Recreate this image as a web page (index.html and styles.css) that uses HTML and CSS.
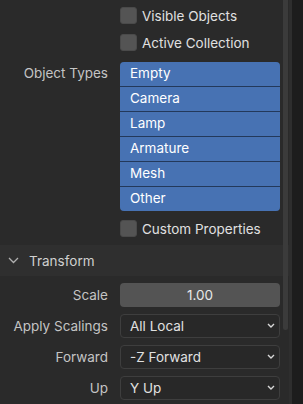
FILE: index.html
```html
<!DOCTYPE html>
<html>
<head>
<meta charset="utf-8">
<link rel="stylesheet" href="styles.css">
</head>
<body>
<div class="panel">
  <div class="content">
    <div class="row check-row">
      <div class="label"></div>
      <div class="check"><span class="box"></span><span>Visible Objects</span></div>
    </div>
    <div class="row check-row">
      <div class="label"></div>
      <div class="check"><span class="box"></span><span>Active Collection</span></div>
    </div>
    <div class="row list-row">
      <div class="label list-label">Object Types</div>
      <div class="list">
        <div class="item">Empty</div>
        <div class="item">Camera</div>
        <div class="item">Lamp</div>
        <div class="item">Armature</div>
        <div class="item">Mesh</div>
        <div class="item">Other</div>
      </div>
    </div>
    <div class="row check-row custom">
      <div class="label"></div>
      <div class="check"><span class="box"></span><span>Custom Properties</span></div>
    </div>
    <div class="header">
      <svg class="hchev" width="11" height="7" viewBox="0 0 11 7"><polyline points="1,1 5.5,5.5 10,1" fill="none" stroke="#b0b0b0" stroke-width="1.3"/></svg>
      <span>Transform</span>
    </div>
    <div class="row field-row first-field">
      <div class="label">Scale</div>
      <div class="num">1.00</div>
    </div>
    <div class="row field-row">
      <div class="label">Apply Scalings</div>
      <div class="drop"><span>All Local</span><svg width="8" height="5" viewBox="0 0 8 5"><polyline points="1,1 4,4 7,1" fill="none" stroke="#d8d8d8" stroke-width="1.4"/></svg></div>
    </div>
    <div class="row field-row">
      <div class="label">Forward</div>
      <div class="drop"><span>-Z Forward</span><svg width="8" height="5" viewBox="0 0 8 5"><polyline points="1,1 4,4 7,1" fill="none" stroke="#d8d8d8" stroke-width="1.4"/></svg></div>
    </div>
    <div class="row field-row">
      <div class="label">Up</div>
      <div class="drop"><span>Y Up</span><svg width="8" height="5" viewBox="0 0 8 5"><polyline points="1,1 4,4 7,1" fill="none" stroke="#d8d8d8" stroke-width="1.4"/></svg></div>
    </div>
  </div>
  <div class="scrollbar"></div>
</div>
</body>
</html>
```
FILE: styles.css
```css
html, body {
  margin: 0;
  padding: 0;
  height: 100%;
  overflow: hidden;
}
body {
  background: #1d1d1d;
  font-family: Inter, "DejaVu Sans", sans-serif;
  font-size: 13.5px;
  line-height: 16px;
  color: #dcdcdc;
}
.panel {
  position: relative;
  width: 289px;
  height: 404px;
  background: #2a2a2a;
  border-right: 3px solid #2e2e2e;
}
.content {
  padding-top: 2px;
}
.row {
  display: grid;
  grid-template-columns: 108px 160px;
  column-gap: 12px;
  align-items: center;
}
.label {
  text-align: right;
  color: #c4c4c4;
}
.check-row {
  height: 27px;
}
.check {
  display: flex;
  align-items: center;
  gap: 5px;
  color: #e0e0e0;
}
.box {
  width: 17px;
  height: 17px;
  border-radius: 3px;
  background: #545454;
  box-sizing: border-box;
  border: 1px solid #4a4a4a;
}
.list-row {
  margin-top: 6px;
  align-items: start;
}
.list-label {
  line-height: 23px;
}
.list {
  background: #23395b;
  border-radius: 4px;
  overflow: hidden;
  display: flex;
  flex-direction: column;
  gap: 1px;
}
.item {
  background: #4772b3;
  color: #ffffff;
  height: 24px;
  line-height: 23px;
  padding-left: 10px;
}
.custom {
  margin-top: 4px;
}
.header {
  margin-top: 3px;
  height: 31px;
  background: #2f2f2f;
  display: flex;
  align-items: center;
  gap: 10px;
  padding-left: 8px;
  color: #d0d0d0;
}
.field-row {
  height: 31px;
}
.first-field {
  margin-top: 3px;
}
.num {
  height: 24px;
  background: #545454;
  border-radius: 4px;
  display: flex;
  align-items: center;
  justify-content: center;
  color: #e8e8e8;
}
.drop {
  height: 24px;
  box-sizing: border-box;
  border: 1px solid #3e3e3e;
  background: #282828;
  border-radius: 4px;
  display: flex;
  align-items: center;
  justify-content: space-between;
  padding: 0 4px 0 9px;
  color: #e0e0e0;
}
.scrollbar {
  position: absolute;
  left: 283px;
  top: 0;
  width: 5px;
  height: 330px;
  background: #3b3b3b;
  border-radius: 0 0 3px 3px;
}
```
